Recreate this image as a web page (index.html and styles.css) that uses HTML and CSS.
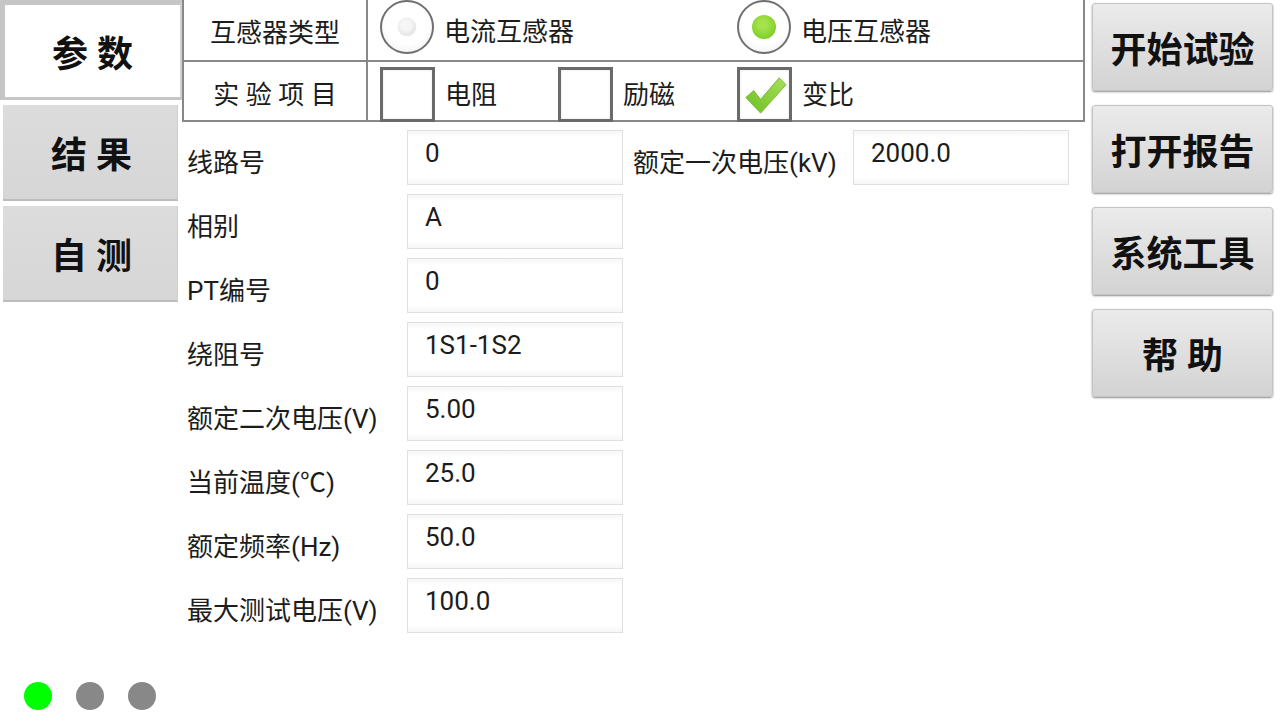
FILE: index.html
```html
<!DOCTYPE html>
<html lang="zh-CN">
<head>
    <meta charset="UTF-8">
    <meta name="viewport" content="width=device-width, initial-scale=1.0">
    <title>互感器测试仪 - 参数</title>
    <link rel="stylesheet" href="styles.css">
</head>
<body>
    <div class="page">
        <div class="screen">
            <!-- left tabs -->
            <div class="tabs">
                <div class="tab active">参 数</div>
                <div class="tab">结 果</div>
                <div class="tab">自 测</div>
            </div>

            <div class="main">
                <div class="table">
                    <div class="trow first">
                        <div class="tlabel">互感器类型</div>
                        <div class="options radios">
                            <div class="option">
                                <span class="radio"></span>
                                <span>电流互感器</span>
                            </div>
                            <div class="option">
                                <span class="radio checked"></span>
                                <span>电压互感器</span>
                            </div>
                        </div>
                    </div>
                    <div class="trow second">
                        <div class="tlabel">实 验 项 目</div>
                        <div class="options checks">
                            <div class="option">
                                <span class="checkbox"></span>
                                <span>电阻</span>
                            </div>
                            <div class="option">
                                <span class="checkbox"></span>
                                <span>励磁</span>
                            </div>
                            <div class="option">
                                <span class="checkbox">
                                    <svg viewBox="0 0 50 50" width="49" height="49">
                                        <defs>
                                            <linearGradient id="tick" x1="0" y1="1" x2="1" y2="0">
                                                <stop offset="0" stop-color="#6cbf22"/>
                                                <stop offset="1" stop-color="#a8e05a"/>
                                            </linearGradient>
                                        </defs>
                                        <polygon points="6,28 14,21 21,30 40,8 47,15 21,44" fill="url(#tick)" stroke="#78b83a" stroke-width="1" stroke-linejoin="round"/>
                                    </svg>
                                </span>
                                <span>变比</span>
                            </div>
                        </div>
                    </div>
                </div>

                <div class="form">
                    <div class="label">线路号</div>
                    <div class="value">0</div>
                    <div class="label second-col">额定一次电压(kV)</div>
                    <div class="value">2000.0</div>

                    <div class="label">相别</div>
                    <div class="value">A</div>

                    <div class="label">PT编号</div>
                    <div class="value">0</div>

                    <div class="label">绕阻号</div>
                    <div class="value">1S1-1S2</div>

                    <div class="label">额定二次电压(V)</div>
                    <div class="value">5.00</div>

                    <div class="label">当前温度(℃)</div>
                    <div class="value">25.0</div>

                    <div class="label">额定频率(Hz)</div>
                    <div class="value">50.0</div>

                    <div class="label">最大测试电压(V)</div>
                    <div class="value">100.0</div>
                </div>
            </div>

            <!-- right action buttons -->
            <div class="actions">
                <div class="button">开始试验</div>
                <div class="button">打开报告</div>
                <div class="button">系统工具</div>
                <div class="button">帮 助</div>
            </div>
        </div>

        <div class="dots">
            <span class="dot on"></span>
            <span class="dot"></span>
            <span class="dot"></span>
        </div>
    </div>
</body>
</html>
```

FILE: styles.css
```css
* {
    box-sizing: border-box;
}

body {
    margin: 0;
    background: #ffffff;
    color: #1c1c1c;
    font-family: Roboto, "Noto Sans CJK SC", sans-serif;
    font-size: 26px;
}

.page {
    height: 100vh;
    display: flex;
    flex-direction: column;
}

.screen {
    flex: 1;
    display: flex;
}

/* left tabs */
.tabs {
    width: 182px;
    display: flex;
    flex-direction: column;
    gap: 5px;
}

.tab {
    height: 96px;
    width: 175px;
    margin-left: 3px;
    display: flex;
    align-items: center;
    justify-content: center;
    padding-left: 3px;
    font-size: 36px;
    font-weight: bold;
    color: #111;
    background: linear-gradient(#dcdcdc, #d6d6d6);
    border-bottom: 2px solid #bcbcbc;
    border-right: 1px solid #cfcfcf;
}

.tab.active {
    height: 100px;
    width: 182px;
    margin-left: 0;
    padding-left: 0;
    background: #fff;
    border-top: 5px solid #c6c6c6;
    border-left: 5px solid #c6c6c6;
    border-bottom: 3px solid #c6c6c6;
    border-right: 2px solid #d0d0d0;
}

/* middle */
.main {
    width: 903px;
}

.table {
    border-left: 2px solid #888;
    border-right: 2px solid #888;
    border-bottom: 2px solid #888;
}

.trow {
    display: flex;
}

.trow.first {
    height: 62px;
    border-bottom: 2px solid #888;
}

.trow.second {
    height: 58px;
}

.tlabel {
    width: 184px;
    border-right: 2px solid #888;
    display: flex;
    align-items: center;
    justify-content: center;
}

.trow.second .tlabel {
    padding-top: 2px;
}

.options {
    flex: 1;
    display: grid;
    padding-left: 12px;
    align-items: center;
}

.radios {
    grid-template-columns: 357px auto;
}

.checks {
    grid-template-columns: 178px 179px auto;
}

.option {
    display: flex;
    align-items: center;
    gap: 10px;
}

.radios .option span:last-child {
    margin-bottom: 1px;
}

.radio {
    width: 54px;
    height: 54px;
    margin-bottom: 6px;
    border-radius: 50%;
    border: 2px solid #6f6f6f;
    background: radial-gradient(circle at 50% 40%, #ffffff 55%, #ececec 100%);
    display: flex;
    align-items: center;
    justify-content: center;
}

.radio::after {
    content: "";
    width: 18px;
    height: 18px;
    border-radius: 50%;
    background: radial-gradient(circle at 45% 40%, #f6f6f6 30%, #d8d8d8 100%);
    box-shadow: 0 0 1px #c4c4c4;
}

.radio.checked::after {
    width: 24px;
    height: 24px;
    background: radial-gradient(circle at 45% 40%, #a5e34c 20%, #6cc414 100%);
    box-shadow: none;
}

.checkbox {
    width: 55px;
    height: 55px;
    margin-top: 5px;
    border: 3px solid #6a6a6a;
    background: #fff;
    box-shadow: inset 0 0 2px #d8d8d8;
    display: flex;
    align-items: center;
    justify-content: center;
}

.checkbox svg {
    display: block;
}

/* parameter form */
.form {
    margin-top: 8px;
    padding-left: 5px;
    display: grid;
    grid-template-columns: 220px 216px 230px 216px;
    grid-auto-rows: 55px;
    row-gap: 9px;
}

.label {
    grid-column: 1;
    display: flex;
    align-items: center;
    padding-top: 10px;
    line-height: 30px;
    white-space: nowrap;
}

.label.second-col {
    grid-column: 3;
    padding-left: 10px;
}

.value {
    border: 1px solid #e0e0e0;
    background: linear-gradient(#f7f7f7, #ffffff 12%, #ffffff 88%, #f6f6f6);
    padding: 7px 0 0 17px;
    line-height: 30px;
}

/* right buttons */
.actions {
    flex: 1;
    padding: 3px 7px 0;
    display: flex;
    flex-direction: column;
    gap: 14px;
}

.button {
    height: 88px;
    width: 181px;
    display: flex;
    align-items: center;
    justify-content: center;
    font-size: 36px;
    font-weight: bold;
    color: #111;
    border: 1px solid #c4c4c4;
    border-radius: 3px;
    background: linear-gradient(#ebebeb, #d3d3d3);
    box-shadow: 0 1px 2px rgba(0, 0, 0, 0.45);
}

/* page indicator */
.dots {
    display: flex;
    gap: 24px;
    padding: 0 0 10px 24px;
}

.dot {
    width: 28px;
    height: 28px;
    border-radius: 50%;
    background: #888;
}

.dot.on {
    background: #00ff00;
}
```
